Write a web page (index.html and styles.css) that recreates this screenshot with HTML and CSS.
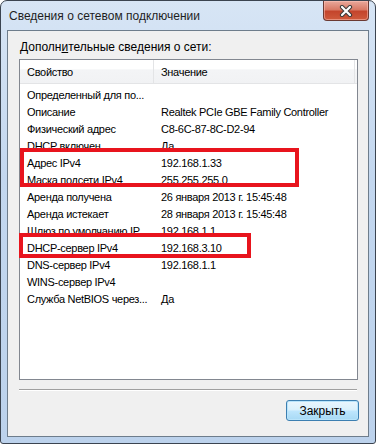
FILE: index.html
```html
<!DOCTYPE html>
<html lang="ru">
<head>
    <meta charset="UTF-8">
    <title>Сведения о сетевом подключении</title>
    <link rel="stylesheet" href="styles.css">
</head>
<body>

    <div class="window">
        <div class="titlebar">
            <span class="title">Сведения о сетевом подключении</span>
            <div class="close-btn">
                <svg width="18" height="12" viewBox="0 0 18 12">
                    <path d="M5 2 L13 10 M13 2 L5 10" stroke="#3a3a3a" stroke-width="4.2" stroke-linecap="round"/>
                    <path d="M5 2 L13 10 M13 2 L5 10" stroke="#ffffff" stroke-width="2.2" stroke-linecap="round"/>
                </svg>
            </div>
        </div>

        <div class="client">
            <div class="caption">Дополн<u>и</u>тельные сведения о сети:</div>

            <div class="listview">
                <div class="lv-header">
                    <div class="hcol prop">Свойство</div>
                    <div class="hcol val">Значение</div>
                </div>
                <div class="lv-rows">
                    <div class="row"><span class="prop">Определенный для по...</span><span class="val"></span></div>
                    <div class="row"><span class="prop">Описание</span><span class="val">Realtek PCIe GBE Family Controller</span></div>
                    <div class="row"><span class="prop">Физический адрес</span><span class="val">C8-6C-87-8C-D2-94</span></div>
                    <div class="row"><span class="prop">DHCP включен</span><span class="val">Да</span></div>
                    <div class="row"><span class="prop">Адрес IPv4</span><span class="val">192.168.1.33</span></div>
                    <div class="row"><span class="prop">Маска подсети IPv4</span><span class="val">255.255.255.0</span></div>
                    <div class="row"><span class="prop">Аренда получена</span><span class="val">26 января 2013 г. 15:45:48</span></div>
                    <div class="row"><span class="prop">Аренда истекает</span><span class="val">28 января 2013 г. 15:45:48</span></div>
                    <div class="row"><span class="prop">Шлюз по умолчанию IP...</span><span class="val">192.168.1.1</span></div>
                    <div class="row"><span class="prop">DHCP-сервер IPv4</span><span class="val">192.168.3.10</span></div>
                    <div class="row"><span class="prop">DNS-сервер IPv4</span><span class="val">192.168.1.1</span></div>
                    <div class="row"><span class="prop">WINS-сервер IPv4</span><span class="val"></span></div>
                    <div class="row"><span class="prop">Служба NetBIOS через...</span><span class="val">Да</span></div>
                </div>

                <!-- красные рамки поверх списка -->
                <div class="mark mark-ip"></div>
                <div class="mark mark-dhcp"></div>
            </div>

            <div class="separator"></div>

            <div class="footer">
                <button class="btn">Закрыть</button>
            </div>
        </div>
    </div>

</body>
</html>
```

FILE: styles.css
```css
/* окно в стиле Windows 7 */
body {
    margin: 0;
    padding: 0;
    font-family: 'Liberation Sans', Arial, sans-serif;
    background: #ffffff;
}

.window {
    width: 376px;
    height: 444px;
    box-sizing: border-box;
    border: 1px solid #3b4450;
    border-radius: 7px 7px 3px 3px;
    background: linear-gradient(180deg, #d7e5f5 0%, #c3d7ef 40%, #bcd2ec 100%);
    padding: 0 6px 6px 6px;
    display: flex;
    flex-direction: column;
}

.titlebar {
    height: 29px;
    display: flex;
    align-items: flex-start;
    justify-content: space-between;
}

.title {
    font-size: 12px;
    color: #1e1e1e;
    margin-left: 2px;
    margin-top: 8px;
}

.close-btn {
    width: 44px;
    height: 19px;
    border: 1px solid #6b3a33;
    border-top: none;
    border-radius: 0 0 4px 4px;
    background: linear-gradient(180deg, #e9a99c 0%, #d97a66 45%, #c4452c 55%, #cf5a3c 100%);
    display: flex;
    align-items: center;
    justify-content: center;
    box-shadow: inset 0 0 0 1px rgba(255, 200, 190, 0.5);
}

.client {
    flex: 1;
    background: #f0f0f0;
    border: 1px solid #6e7d8c;
    display: flex;
    flex-direction: column;
    padding: 0 9px 0 11px;
}

.caption {
    font-size: 12px;
    color: #000;
    margin: 9px 0 0 1px;
    height: 19px;
}

.listview {
    position: relative;
    height: 321px;
    margin-right: 1px;
    box-sizing: border-box;
    background: #fff;
    border: 1px solid #828790;
    font-size: 11px;
    letter-spacing: -0.3px;
    color: #000;
}

.lv-header {
    height: 23px;
    display: flex;
    background: linear-gradient(180deg, #ffffff 0%, #ffffff 40%, #f3f4f6 42%, #f1f2f4 100%);
    border-bottom: 1px solid #e3e4e6;
}

.hcol {
    display: flex;
    align-items: center;
    padding-left: 7px;
    color: #000;
}

.hcol.prop {
    width: 126px;
    border-right: 1px solid #e3e4e6;
}

.hcol.val {
    flex: 1;
    margin-right: 2px;
    border-right: 1px solid #e3e4e6;
}

.lv-rows {
    padding-top: 2px;
}

.row {
    height: 17px;
    display: flex;
    align-items: center;
}

.row .prop {
    width: 127px;
    padding-left: 7px;
    white-space: nowrap;
    overflow: hidden;
}

.row .val {
    padding-left: 7px;
    white-space: nowrap;
}

.mark {
    position: absolute;
    border: 4px solid #e8141d;
    box-sizing: border-box;
}

.mark-ip {
    left: 0;
    top: 88px;
    width: 279px;
    height: 39px;
}

.mark-dhcp {
    left: -1px;
    top: 173px;
    width: 232px;
    height: 25px;
}

.separator {
    height: 0;
    margin: 9px 2px 0 0;
    border-top: 1px solid #a0a0a0;
    border-bottom: 1px solid #ffffff;
}

.footer {
    display: flex;
    justify-content: flex-end;
    padding-top: 9px;
}

.btn {
    width: 73px;
    height: 21px;
    border: 1px solid #3c7fb1;
    border-radius: 3px;
    background: linear-gradient(180deg, #eaf6fd 0%, #d9f0fc 48%, #bee6fd 52%, #a7d9f5 100%);
    box-shadow: inset 0 0 0 1px #b9e4fb;
    font-family: 'Liberation Sans', Arial, sans-serif;
    font-size: 12px;
    color: #000;
    padding: 0;
}
```
